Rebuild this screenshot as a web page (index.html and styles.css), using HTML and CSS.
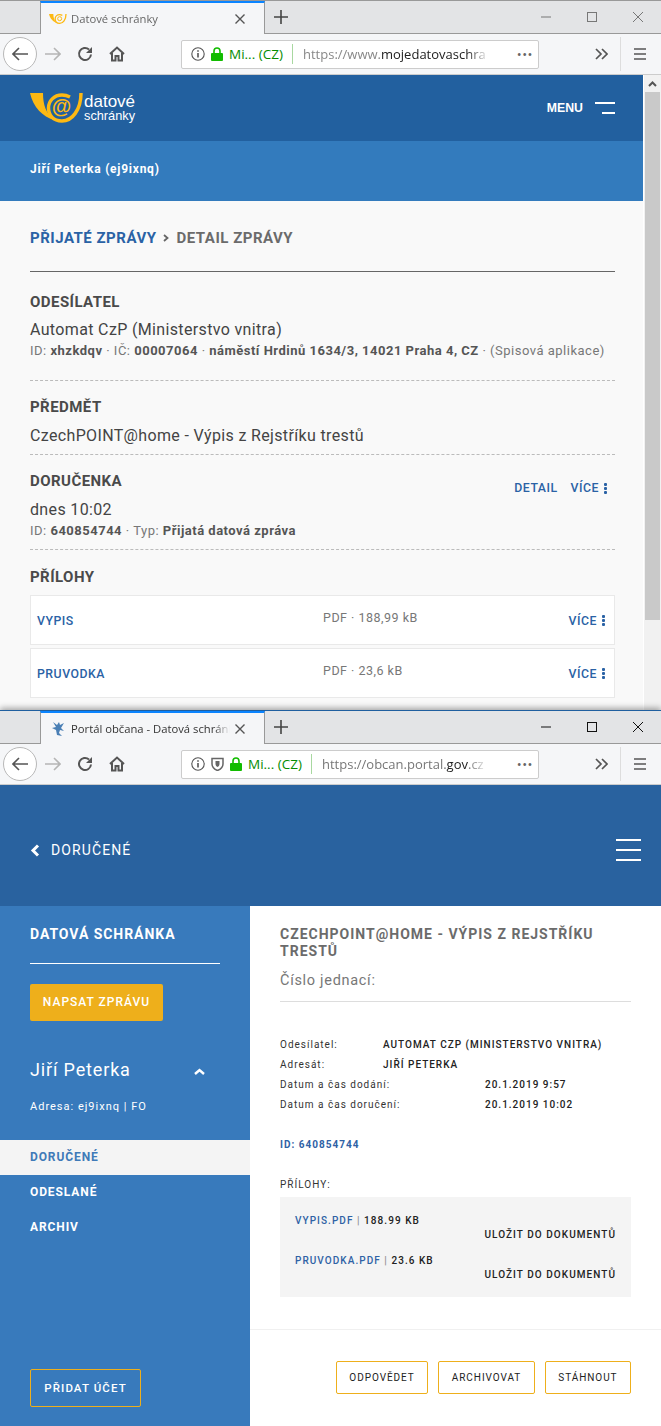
FILE: index.html
```html
<!DOCTYPE html>
<html lang="cs">

<head>
    <meta charset="UTF-8">
    <title>Datové schránky</title>
    <link rel="stylesheet" href="styles.css">
</head>

<body>
    <!-- prvni okno -->
    <div class="okno okno1">
        <div class="zalozky">
            <div class="zalozka">
                <svg class="favicon" width="18" height="12" viewBox="30 92 54 32">
                    <path d="M30 93H43C43 105 46 113 54 120C43 117 33 107 30 93Z" fill="#fdb913" />
                    <path d="M81 93C81 110 72 121 62 121C53 121 48.5 115 48.5 108C48.5 101 54 95 62 95C65 95 68 96 70 97" fill="none" stroke="#fdb913" stroke-width="4" />
                    <circle cx="62" cy="107" r="6" fill="none" stroke="#fdb913" stroke-width="3" />
                </svg>
                <span class="zalozka-text">Datové schránky</span>
                <svg class="zavrit" width="10" height="10" viewBox="0 0 10 10">
                    <path d="M0.5 0.5L9.5 9.5M9.5 0.5L0.5 9.5" stroke="#555" stroke-width="1.4" />
                </svg>
            </div>
            <svg class="plus" width="14" height="14" viewBox="0 0 14 14">
                <path d="M7 0V14M0 7H14" stroke="#444" stroke-width="1.6" />
            </svg>
            <div class="ovladani">
                <svg width="10" height="10" viewBox="0 0 10 10">
                    <path d="M0 5H10" stroke="#777" />
                </svg>
                <svg width="10" height="10" viewBox="0 0 10 10">
                    <rect x="0.5" y="0.5" width="9" height="9" fill="none" stroke="#777" />
                </svg>
                <svg width="10" height="10" viewBox="0 0 10 10">
                    <path d="M0 0L10 10M10 0L0 10" stroke="#777" />
                </svg>
            </div>
        </div>
        <div class="lista">
            <div class="zpet">
                <svg width="16" height="14" viewBox="0 0 16 14">
                    <path d="M7 1L1 7L7 13M1 7H16" fill="none" stroke="#555" stroke-width="1.6" />
                </svg>
            </div>
            <svg class="vpred" width="16" height="14" viewBox="0 0 16 14">
                <path d="M9 1L15 7L9 13M15 7H0" fill="none" stroke="#b5b5b5" stroke-width="1.6" />
            </svg>
            <svg class="obnovit" width="16" height="16" viewBox="0 0 16 16">
                <path d="M14 8.5A6 6 0 1 1 12 3.5" fill="none" stroke="#555" stroke-width="2" />
                <path d="M15 1V7H9Z" fill="#555" />
            </svg>
            <svg class="domu" width="16" height="16" viewBox="0 0 16 16">
                <path d="M1 8L8 1.5L15 8M3 7V14.5H6.5V10H9.5V14.5H13V7" fill="none" stroke="#555" stroke-width="2" />
            </svg>
            <div class="adresa">
                <svg class="info" width="14" height="14" viewBox="0 0 14 14">
                    <circle cx="7" cy="7" r="6.2" fill="none" stroke="#555" stroke-width="1.1" />
                    <path d="M7 6V10.5M7 3.2V4.8" stroke="#555" stroke-width="1.6" />
                </svg>
                <svg class="zamek" width="12" height="14" viewBox="0 0 12 14">
                    <path d="M3 6V4A3 3 0 0 1 9 4V6" fill="none" stroke="#12bc00" stroke-width="1.6" />
                    <rect y="6" width="12" height="8" rx="1" fill="#12bc00" />
                </svg>
                <span class="firma">Mi... (CZ)</span>
                <span class="oddelovac"></span>
                <span class="url">https://www.<b>mojedatovaschra</b></span>
                <span class="tecky">•••</span>
            </div>
            <svg class="sipky" width="13" height="12" viewBox="0 0 13 12">
                <path d="M1 1L6 6L1 11M7 1L12 6L7 11" fill="none" stroke="#555" stroke-width="1.7" />
            </svg>
            <span class="svisla"></span>
            <svg class="burger" width="12" height="12" viewBox="0 0 12 12">
                <path d="M0 1H12M0 6H12M0 11H12" stroke="#555" stroke-width="1.6" />
            </svg>
        </div>
        <div class="obsah1">
            <div class="stranka">
                <header class="hlavicka">
                    <svg class="logo" width="54" height="32" viewBox="30 92 54 32">
                        <path d="M30 93H43C43 105 46 113 54 120C43 117 33 107 30 93Z" fill="#fdb913" />
                        <path d="M81 93C81 110 72 121 62 121C53 121 48.5 115 48.5 108C48.5 101 54 95 62 95C65 95 68 96 70 97" fill="none" stroke="#fdb913" stroke-width="3.5" />
                        <text x="61.5" y="113" text-anchor="middle" class="zavinac">@</text>
                    </svg>
                    <div class="logo-text">
                        <span class="logo-1">datové</span>
                        <span class="logo-2">schránky</span>
                    </div>
                    <div class="menu">MENU</div>
                    <div class="menu-ikona">
                        <span class="menu-horni"></span>
                        <span class="menu-dolni"></span>
                    </div>
                </header>
                <div class="uzivatel">Jiří Peterka (ej9ixnq)</div>
                <main class="detail">
                    <div class="drobky">
                        <a class="drobek">PŘIJATÉ ZPRÁVY</a>
                        <svg class="drobek-sipka" width="6" height="8" viewBox="0 0 6 8">
                            <path d="M1 1L4.5 4L1 7" fill="none" stroke="#666" stroke-width="1.8" />
                        </svg>
                        <span>DETAIL ZPRÁVY</span>
                    </div>

                    <section class="sekce sekce-odesilatel">
                        <h2>ODESÍLATEL</h2>
                        <p class="hodnota">Automat CzP (Ministerstvo vnitra)</p>
                        <p class="info-radek">ID: <b>xhzkdqv</b> · IČ: <b>00007064</b> · <b>náměstí Hrdinů 1634/3, 14021 Praha 4, CZ</b> · (Spisová aplikace)</p>
                    </section>

                    <section class="sekce sekce-predmet">
                        <h2>PŘEDMĚT</h2>
                        <p class="hodnota">CzechPOINT@home - Výpis z Rejstříku trestů</p>
                    </section>

                    <section class="sekce sekce-dorucenka">
                        <div class="radek-akce">
                            <h2>DORUČENKA</h2>
                            <div class="akce">
                                <a>DETAIL</a>
                                <a class="vice">VÍCE <i class="tri-tecky"><s></s><s></s><s></s></i></a>
                            </div>
                        </div>
                        <p class="hodnota">dnes 10:02</p>
                        <p class="info-radek">ID: <b>640854744</b> · Typ: <b>Přijatá datová zpráva</b></p>
                    </section>

                    <section class="sekce sekce-prilohy">
                        <h2>PŘÍLOHY</h2>
                        <div class="priloha">
                            <a class="priloha-nazev">VYPIS</a>
                            <span class="priloha-info">PDF · 188,99 kB</span>
                            <a class="vice">VÍCE <i class="tri-tecky"><s></s><s></s><s></s></i></a>
                        </div>
                        <div class="priloha">
                            <a class="priloha-nazev">PRUVODKA</a>
                            <span class="priloha-info">PDF · 23,6 kB</span>
                            <a class="vice">VÍCE <i class="tri-tecky"><s></s><s></s><s></s></i></a>
                        </div>
                    </section>
                </main>
            </div>
            <div class="posuvnik">
                <div class="posuvnik-sipka">
                    <svg width="9" height="6" viewBox="0 0 9 6">
                        <path d="M1 5L4.5 1.5L8 5" fill="none" stroke="#555" stroke-width="2" />
                    </svg>
                </div>
                <div class="posuvnik-jezdec"></div>
            </div>
        </div>
    </div>

    <!-- druhe okno -->
    <div class="okno okno2">
        <div class="zalozky">
            <div class="zalozka">
                <svg class="favicon lev" width="14" height="16" viewBox="0 0 14 16">
                    <path d="M2 1L6 4L8 1L9 4L13 2L10 7L13 10L9 9L8 12L11 15L6 14L5 9L1 7L5 6Z" fill="#4a7fb5" />
                </svg>
                <span class="zalozka-text tmava">Portál občana - Datová schránka</span>
                <svg class="zavrit" width="10" height="10" viewBox="0 0 10 10">
                    <path d="M0.5 0.5L9.5 9.5M9.5 0.5L0.5 9.5" stroke="#555" stroke-width="1.4" />
                </svg>
            </div>
            <svg class="plus" width="14" height="14" viewBox="0 0 14 14">
                <path d="M7 0V14M0 7H14" stroke="#444" stroke-width="1.6" />
            </svg>
            <div class="ovladani">
                <svg width="10" height="10" viewBox="0 0 10 10">
                    <path d="M0 5H10" stroke="#111" />
                </svg>
                <svg width="10" height="10" viewBox="0 0 10 10">
                    <rect x="0.5" y="0.5" width="9" height="9" fill="none" stroke="#111" />
                </svg>
                <svg width="10" height="10" viewBox="0 0 10 10">
                    <path d="M0 0L10 10M10 0L0 10" stroke="#111" />
                </svg>
            </div>
        </div>
        <div class="lista">
            <div class="zpet">
                <svg width="16" height="14" viewBox="0 0 16 14">
                    <path d="M7 1L1 7L7 13M1 7H16" fill="none" stroke="#555" stroke-width="1.6" />
                </svg>
            </div>
            <svg class="vpred" width="16" height="14" viewBox="0 0 16 14">
                <path d="M9 1L15 7L9 13M15 7H0" fill="none" stroke="#b5b5b5" stroke-width="1.6" />
            </svg>
            <svg class="obnovit" width="16" height="16" viewBox="0 0 16 16">
                <path d="M14 8.5A6 6 0 1 1 12 3.5" fill="none" stroke="#555" stroke-width="2" />
                <path d="M15 1V7H9Z" fill="#555" />
            </svg>
            <svg class="domu" width="16" height="16" viewBox="0 0 16 16">
                <path d="M1 8L8 1.5L15 8M3 7V14.5H6.5V10H9.5V14.5H13V7" fill="none" stroke="#555" stroke-width="2" />
            </svg>
            <div class="adresa">
                <svg class="info" width="14" height="14" viewBox="0 0 14 14">
                    <circle cx="7" cy="7" r="6.2" fill="none" stroke="#555" stroke-width="1.1" />
                    <path d="M7 6V10.5M7 3.2V4.8" stroke="#555" stroke-width="1.6" />
                </svg>
                <svg class="stit" width="13" height="14" viewBox="0 0 13 14">
                    <path d="M1 1.5H12V7C12 10.5 9 12.5 6.5 13.5C4 12.5 1 10.5 1 7Z" fill="none" stroke="#666" stroke-width="1.5" />
                    <path d="M4.5 4H8.5V7C8.5 8.5 7.5 9.5 6.5 10C5.5 9.5 4.5 8.5 4.5 7Z" fill="#666" />
                </svg>
                <svg class="zamek" width="12" height="14" viewBox="0 0 12 14">
                    <path d="M3 6V4A3 3 0 0 1 9 4V6" fill="none" stroke="#12bc00" stroke-width="1.6" />
                    <rect y="6" width="12" height="8" rx="1" fill="#12bc00" />
                </svg>
                <span class="firma">Mi... (CZ)</span>
                <span class="oddelovac"></span>
                <span class="url">https://obcan.portal.<b>gov</b>.cz</span>
                <span class="tecky">•••</span>
            </div>
            <svg class="sipky" width="13" height="12" viewBox="0 0 13 12">
                <path d="M1 1L6 6L1 11M7 1L12 6L7 11" fill="none" stroke="#555" stroke-width="1.7" />
            </svg>
            <span class="svisla"></span>
            <svg class="burger" width="12" height="12" viewBox="0 0 12 12">
                <path d="M0 1H12M0 6H12M0 11H12" stroke="#555" stroke-width="1.6" />
            </svg>
        </div>
        <header class="portal-hlavicka">
            <svg width="10" height="13" viewBox="0 0 10 13">
                <path d="M8 1.5L3 6.5L8 11.5" fill="none" stroke="#fff" stroke-width="3" />
            </svg>
            <span class="portal-zpet">DORUČENÉ</span>
            <div class="portal-burger"><span></span><span></span><span></span></div>
        </header>
        <div class="portal">
            <aside class="bocni">
                <div class="bocni-titul">DATOVÁ SCHRÁNKA</div>
                <a class="tlacitko-napsat">NAPSAT ZPRÁVU</a>
                <div class="ucet">
                    <span>Jiří Peterka</span>
                    <svg width="11" height="7" viewBox="0 0 11 7">
                        <path d="M1 6L5.5 2L10 6" fill="none" stroke="#fff" stroke-width="2.4" />
                    </svg>
                </div>
                <div class="ucet-adresa">Adresa: ej9ixnq | FO</div>
                <nav class="bocni-menu">
                    <a class="aktivni">DORUČENÉ</a>
                    <a>ODESLANÉ</a>
                    <a>ARCHIV</a>
                </nav>
                <a class="tlacitko-ucet">PŘIDAT ÚČET</a>
            </aside>
            <main class="zprava">
                <div class="zprava-telo">
                    <h1>CZECHPOINT@HOME - VÝPIS Z REJSTŘÍKU TRESTŮ</h1>
                    <p class="cislo">Číslo jednací:</p>
                    <div class="udaje">
                        <span>Odesílatel:</span><b class="siroka">AUTOMAT CZP (MINISTERSTVO VNITRA)</b>
                        <span>Adresát:</span><b class="siroka">JIŘÍ PETERKA</b>
                        <span class="dve">Datum a čas dodání:</span><b>20.1.2019 9:57</b>
                        <span class="dve">Datum a čas doručení:</span><b>20.1.2019 10:02</b>
                    </div>
                    <div class="zprava-id">ID: 640854744</div>
                    <div class="prilohy-titul">PŘÍLOHY:</div>
                    <div class="prilohy">
                        <div class="soubor"><a>VYPIS.PDF</a> <i>|</i> 188.99 KB</div>
                        <div class="ulozit">ULOŽIT DO DOKUMENTŮ</div>
                        <div class="soubor"><a>PRUVODKA.PDF</a> <i>|</i> 23.6 KB</div>
                        <div class="ulozit">ULOŽIT DO DOKUMENTŮ</div>
                    </div>
                </div>
                <div class="zprava-tlacitka">
                    <a>ODPOVĚDET</a>
                    <a>ARCHIVOVAT</a>
                    <a>STÁHNOUT</a>
                </div>
            </main>
        </div>
    </div>
</body>

</html>
```

FILE: styles.css
```css
* {
    box-sizing: border-box;
}

body {
    margin: 0;
    width: 661px;
    height: 1426px;
    overflow: hidden;
    font-family: Roboto, sans-serif;
    color: #333;
}

h1,
h2,
p {
    margin: 0;
}

.okno {
    display: flex;
    flex-direction: column;
    width: 661px;
    overflow: hidden;
}

.okno1 {
    height: 710px;
}

.okno2 {
    position: relative;
    height: 716px;
    box-shadow: 0 -2px 6px rgba(0, 0, 0, 0.35);
}

/* prohlizec */
.zalozky {
    display: flex;
    align-items: center;
    height: 34px;
    padding-left: 40px;
    background: #e3e4e6;
    border-top: 1px solid #999;
    border-bottom: 1px solid #999;
}

.okno2 .zalozky {
    border-top-color: #1f5f9f;
}

.zalozka {
    display: flex;
    align-items: center;
    align-self: stretch;
    width: 225px;
    margin-bottom: -1px;
    background: #f5f6f8;
    border-left: 1px solid #999;
    border-right: 1px solid #999;
    border-top: 2px solid #0a84ff;
    font-family: "Open Sans", sans-serif;
}

.favicon {
    flex: none;
    margin-left: 8px;
    margin-right: 4px;
}

.lev {
    margin-left: 10px;
    margin-right: 6px;
}

.zalozka-text {
    flex: 1;
    overflow: hidden;
    white-space: nowrap;
    color: #666;
    font-size: 11.25px;
    -webkit-mask-image: linear-gradient(to right, #000 90%, transparent);
}

.tmava {
    color: #333;
}

.zavrit {
    flex: none;
    margin: 0 19px 0 5px;
}

.plus {
    margin-left: 9px;
}

.ovladani {
    display: flex;
    gap: 36px;
    margin-left: auto;
    margin-right: 18px;
}

.lista {
    display: flex;
    align-items: center;
    height: 41px;
    padding-left: 3px;
    background: #f5f6f8;
    border-bottom: 1px solid #ccc;
}

.zpet {
    display: flex;
    align-items: center;
    justify-content: center;
    width: 34px;
    height: 34px;
    background: #fff;
    border: 1px solid #b8b8b8;
    border-radius: 50%;
}

.vpred {
    margin-left: 8px;
}

.obnovit {
    margin-left: 16px;
}

.domu {
    margin-left: 16px;
}

.adresa {
    display: flex;
    align-items: center;
    width: 358px;
    height: 29px;
    margin-left: 56px;
    padding-left: 9px;
    background: #fff;
    border: 1px solid #ccc;
    border-radius: 2px;
    font-family: "Open Sans", sans-serif;
    font-size: 13px;
}

.zamek {
    margin-left: 6px;
}

.stit {
    margin-left: 6px;
}

.firma {
    margin-left: 6px;
    width: 57px;
    color: #058b00;
    font-size: 13.5px;
    white-space: nowrap;
}

.oddelovac {
    width: 1px;
    height: 20px;
    margin-left: 6px;
    background: #a8d8a0;
}

.url {
    flex: 1;
    margin-left: 10px;
    overflow: hidden;
    white-space: nowrap;
    color: #777;
    -webkit-mask-image: linear-gradient(to right, #000 88%, transparent);
}

.url b {
    font-weight: 400;
    color: #222;
}

.okno1 .url {
    color: #888;
}

.tecky {
    margin-right: 5px;
    margin-left: 28px;
    color: #666;
    font-size: 13px;
    letter-spacing: 0.5px;
}

.sipky {
    margin-left: 56px;
}

.svisla {
    width: 1px;
    height: 34px;
    margin-left: 12px;
    background: #ddd;
}

.burger {
    margin-left: 13px;
}

/* prvni stranka */
.obsah1 {
    display: flex;
    flex: 1;
    min-height: 0;
}

.stranka {
    display: flex;
    flex-direction: column;
    width: 643px;
    background: #f9f9f9;
}

.hlavicka {
    display: flex;
    align-items: center;
    height: 66px;
    padding: 0 28px 0 30px;
    background: #22609f;
    color: #fff;
}

.logo {
    flex: none;
    margin-top: -1px;
}

.zavinac {
    fill: #fdb913;
    font-family: "Liberation Sans", sans-serif;
    font-weight: 700;
    font-size: 20px;
}

.logo-text {
    display: flex;
    flex-direction: column;
    font-family: "Liberation Sans", sans-serif;
}

.logo-1 {
    font-size: 17px;
    line-height: 15px;
}

.logo-2 {
    font-size: 12.75px;
    line-height: 13px;
}

.menu {
    margin-left: auto;
    font-family: "Liberation Sans", sans-serif;
    font-size: 12.3px;
    font-weight: 700;
}

.menu-ikona {
    display: flex;
    flex-direction: column;
    align-items: flex-end;
    gap: 8px;
    width: 20px;
    margin-left: 12px;
}

.menu-horni,
.menu-dolni {
    display: block;
    height: 2px;
    background: #fff;
}

.menu-horni {
    width: 20px;
}

.menu-dolni {
    width: 13px;
}

.uzivatel {
    height: 60px;
    padding-left: 30px;
    background: #337bbd;
    color: #fff;
    font-size: 12px;
    font-weight: 700;
    line-height: 57px;
    letter-spacing: 0.75px;
}

.detail {
    flex: 1;
    padding: 0 28px 0 30px;
}

.drobky {
    display: flex;
    align-items: center;
    height: 71px;
    padding-top: 3px;
    border-bottom: 1px solid #666;
    color: #6b6b6b;
    font-size: 15px;
    font-weight: 700;
    letter-spacing: 0.5px;
}

.drobek {
    color: #2a62a5;
}

.drobek-sipka {
    margin: 0 7px;
}

.sekce {
    border-bottom: 1px dashed #bbb;
}

.sekce h2 {
    color: #4a4a4a;
    font-size: 15px;
    line-height: 20px;
    font-weight: 700;
    letter-spacing: 0.45px;
}

.hodnota {
    margin-top: 8px;
    color: #444;
    font-size: 16px;
    line-height: 20px;
    letter-spacing: 0.35px;
}

.info-radek {
    margin-top: 3px;
    color: #777;
    font-size: 13px;
    line-height: 16px;
    letter-spacing: 0.5px;
}

.info-radek b {
    color: #555;
}

.sekce-odesilatel {
    height: 109px;
    padding-top: 20px;
}

.sekce-predmet {
    height: 74px;
    padding-top: 16px;
}

.sekce-predmet .hodnota {
    margin-top: 9px;
}

.sekce-dorucenka {
    height: 95px;
    padding-top: 16px;
}

.sekce-dorucenka .hodnota {
    margin-top: 9px;
}

.radek-akce {
    display: flex;
    justify-content: space-between;
    height: 20px;
}

.akce {
    display: flex;
    align-items: center;
    gap: 13px;
    height: 14px;
    margin-top: 10px;
    margin-right: 8px;
}

.akce a,
.vice {
    color: #2a62a5;
    font-size: 12.3px;
    font-weight: 500;
    line-height: 14px;
    letter-spacing: 0.5px;
}

.vice {
    display: inline-flex;
    align-items: center;
    gap: 5px;
}

.tri-tecky {
    display: inline-flex;
    flex-direction: column;
    gap: 1px;
}

.tri-tecky s {
    display: block;
    width: 3px;
    height: 3px;
    border-radius: 1px;
    background: #2a62a5;
}

.sekce-prilohy {
    border-bottom: 0;
    padding-top: 17px;
}

.sekce-prilohy h2 {
    margin-bottom: 8px;
}

.priloha {
    display: grid;
    grid-template-columns: 286px 1fr auto;
    align-items: center;
    height: 50px;
    margin-bottom: 3px;
    padding: 1px 9px 0 6px;
    background: #fff;
    border: 1px solid #e9e9e9;
}

.priloha-nazev {
    color: #2a62a5;
    font-size: 12.3px;
    font-weight: 500;
    letter-spacing: 0.5px;
}

.priloha-info {
    margin-top: -7px;
    color: #777;
    font-size: 12.5px;
    letter-spacing: 0.5px;
}

.posuvnik {
    flex: 1;
    padding: 0 1px;
    background: #f1f1f1;
    border-left: 1px solid #fff;
}

.posuvnik-sipka {
    display: flex;
    align-items: center;
    justify-content: center;
    height: 17px;
}

.posuvnik-jezdec {
    height: 528px;
    background: #c9c9c9;
}

/* portal */
.portal-hlavicka {
    display: flex;
    align-items: center;
    height: 121px;
    padding: 9px 20px 0 30px;
    background: #29629f;
    color: #fff;
}

.portal-zpet {
    margin-left: 11px;
    font-size: 14px;
    letter-spacing: 1.1px;
}

.portal-burger {
    display: flex;
    flex-direction: column;
    gap: 8px;
    width: 25px;
    margin-left: auto;
}

.portal-burger span {
    display: block;
    height: 2px;
    background: #fff;
}

.portal {
    display: flex;
    flex: 1;
    min-height: 0;
}

.bocni {
    display: flex;
    flex-direction: column;
    flex: none;
    width: 250px;
    background: #387abc;
    color: #fff;
}

.bocni-titul {
    width: 190px;
    height: 58px;
    margin-left: 30px;
    padding-top: 19px;
    border-bottom: 1px solid #fff;
    font-size: 14px;
    line-height: 18px;
    font-weight: 700;
    letter-spacing: 0.95px;
}

.tlacitko-napsat {
    width: 133px;
    height: 37px;
    margin: 20px 0 0 30px;
    background: #eeaf1b;
    border-radius: 2px;
    font-size: 12px;
    font-weight: 500;
    line-height: 37px;
    text-align: center;
    letter-spacing: 1px;
}

.ucet {
    display: flex;
    align-items: center;
    justify-content: space-between;
    width: 175px;
    height: 26px;
    margin: 35px 0 0 30px;
    font-size: 18px;
    letter-spacing: 0.85px;
}

.ucet svg {
    margin-top: 5px;
}

.ucet-adresa {
    margin: 18px 0 0 30px;
    font-size: 11px;
    line-height: 14px;
    letter-spacing: 1px;
}

.bocni-menu {
    display: flex;
    flex-direction: column;
    margin-top: 26px;
    font-size: 12px;
    font-weight: 700;
    letter-spacing: 0.9px;
}

.bocni-menu a {
    height: 35px;
    padding-left: 30px;
    line-height: 35px;
}

.bocni-menu .aktivni {
    background: #f4f4f4;
    color: #3f7ab8;
}

.tlacitko-ucet {
    width: 111px;
    height: 38px;
    margin: auto 0 19px 30px;
    border: 1px solid #eeaf1b;
    border-radius: 2px;
    font-size: 11.5px;
    font-weight: 500;
    line-height: 36px;
    text-align: center;
    letter-spacing: 1.1px;
}

.zprava {
    display: flex;
    flex-direction: column;
    flex: 1;
    background: #fff;
}

.zprava-telo {
    height: 424px;
    padding: 20px 30px 0;
    border-bottom: 1px solid #f0f0f0;
}

.zprava h1 {
    color: #6b6b6b;
    font-size: 14px;
    line-height: 17px;
    font-weight: 700;
    letter-spacing: 1px;
}

.cislo {
    height: 32px;
    margin-top: 10px;
    padding-top: 1px;
    border-bottom: 1px solid #ddd;
    color: #777;
    font-size: 14.5px;
    line-height: 20px;
    letter-spacing: 0.7px;
}

.udaje {
    display: grid;
    grid-template-columns: 103px 102px 1fr;
    grid-auto-rows: 20px;
    align-items: center;
    margin-top: 32px;
    color: #333;
    font-size: 10px;
    letter-spacing: 1px;
}

.udaje b {
    font-weight: 500;
    color: #222;
}

.siroka {
    grid-column: 2 / 4;
}

.dve {
    grid-column: 1 / 3;
}

.zprava-id {
    margin-top: 24px;
    color: #2f62a5;
    font-size: 10px;
    line-height: 14px;
    font-weight: 700;
    letter-spacing: 1px;
}

.prilohy-titul {
    margin-top: 26px;
    color: #333;
    font-size: 10px;
    line-height: 14px;
    letter-spacing: 1px;
}

.prilohy {
    height: 100px;
    margin-top: 5px;
    padding: 17px 15px 0;
    background: #f4f4f4;
    font-size: 10px;
    font-weight: 500;
    line-height: 14px;
    letter-spacing: 1.05px;
    color: #222;
}

.soubor a {
    color: #2f62a5;
}

.soubor i {
    color: #888;
    font-style: normal;
}

.ulozit {
    margin-bottom: 12px;
    text-align: right;
}

.zprava-tlacitka {
    display: flex;
    justify-content: flex-end;
    gap: 10px;
    padding: 31px 30px 0 0;
}

.zprava-tlacitka a {
    height: 33px;
    padding: 0 12.5px;
    border: 1px solid #eeaf1b;
    border-radius: 2px;
    color: #222;
    font-size: 10px;
    line-height: 31px;
    letter-spacing: 0.95px;
}
```
